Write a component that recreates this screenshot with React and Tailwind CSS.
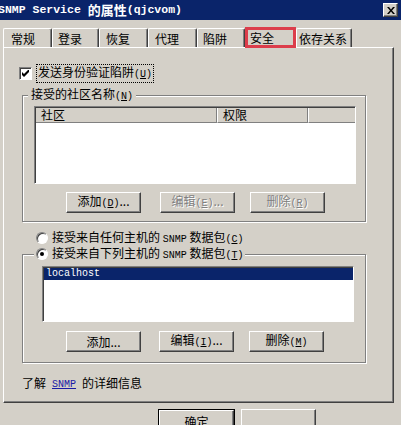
import React from "react";

const Acc = ({ k }) => (
  <span className="font-['Liberation_Mono',monospace] text-[10px]">
    (<span className="underline">{k}</span>)
  </span>
);

const Mono = ({ children }) => (
  <span className="font-['Liberation_Mono',monospace] text-[10px]">{children}</span>
);

function Btn({ children, disabled, className = "" }) {
  return (
    <div
      className={
        "flex h-[21px] w-[75px] items-center justify-center border border-t-white border-l-white border-r-[#404040] border-b-[#404040] shadow-[inset_-1px_-1px_0_#808080] " +
        (disabled ? "text-[#808080] [text-shadow:1px_1px_0_#ffffff] " : "") +
        className
      }
    >
      <span>{children}</span>
    </div>
  );
}

function Tab({ label, w, pl, active }) {
  if (active) {
    return (
      <div
        className={`relative z-10 -mb-[1px] h-[21px] border-[3px] border-[#dc3d4b] bg-[#d4d0c8] ${w} ${pl} pt-[1px]`}
      >
        {label}
      </div>
    );
  }
  return (
    <div
      className={`h-[19px] rounded-t-[2px] border-l border-t border-r border-l-white border-t-white border-r-[#404040] shadow-[inset_-1px_0_0_#808080] pt-[3px] ${w} ${pl}`}
    >
      {label}
    </div>
  );
}

function Radio({ checked }) {
  return (
    <div className="flex h-[12px] w-[12px] items-center justify-center rounded-full border border-t-[#808080] border-l-[#808080] border-r-white border-b-white bg-white shadow-[inset_1px_1px_0_#404040]">
      {checked && <div className="h-[4px] w-[4px] rounded-full bg-black" />}
    </div>
  );
}

const sunken =
  "border border-t-[#808080] border-l-[#808080] border-r-white border-b-white shadow-[inset_1px_1px_0_#404040]";

const etched =
  "border border-[#808080] shadow-[inset_1px_1px_0_#ffffff,1px_1px_0_#ffffff]";

export default function App() {
  return (
    <div className="h-[425px] w-[401px] overflow-hidden bg-[#d4d0c8] font-['Noto_Sans_CJK_SC','Noto_Sans',sans-serif] text-[12px] leading-[14px] text-black">
      {/* title bar */}
      <div className="flex h-[20px] items-center justify-between bg-[#0a246a] pr-[3px]">
        <div className="-ml-[2px] flex items-center font-bold text-white">
          <span className="font-['Liberation_Mono',monospace] text-[11.5px]">SNMP Service&nbsp;</span>
          <span className="text-[13px]">的属性</span>
          <span className="font-['Liberation_Mono',monospace] text-[11.5px]">(qjcvom)</span>
        </div>
        <div className="flex h-[14px] w-[15px] items-center justify-center border border-t-white border-l-white border-r-[#404040] border-b-[#404040] bg-[#d4d0c8] shadow-[inset_-1px_-1px_0_#808080]">
          <svg width="8" height="7" viewBox="0 0 8 7">
            <path d="M0 0h2l2 2.5L6 0h2L5 3.5 8 7H6L4 4.5 2 7H0l3-3.5z" fill="#000" />
          </svg>
        </div>
      </div>

      {/* tabs */}
      <div className="mt-[7px] flex h-[20px] items-end pl-[3px]">
        <Tab label="常规" w="w-[49px]" pl="pl-[7px]" />
        <Tab label="登录" w="w-[47px]" pl="pl-[5px]" />
        <Tab label="恢复" w="w-[49px]" pl="pl-[6px]" />
        <Tab label="代理" w="w-[49px]" pl="pl-[6px]" />
        <Tab label="陷阱" w="w-[48px]" pl="pl-[5px]" />
        <Tab label="安全" w="w-[51px]" pl="pl-[2px]" active />
        <Tab label="依存关系" w="w-[56px]" pl="pl-[2px]" />
      </div>

      {/* panel */}
      <div className="ml-[3px] flex h-[356px] w-[391px] flex-col border border-t-white border-l-white border-r-[#404040] border-b-[#404040] shadow-[inset_-1px_-1px_0_#808080]">
        {/* checkbox */}
        <div className="ml-[15px] mt-[18px] flex h-[14px] items-center">
          <div className={`flex h-[13px] w-[13px] items-center justify-center bg-white ${sunken}`}>
            <svg width="7" height="7" viewBox="0 0 7 7">
              <path d="M0 2v3l2 2 5-5V-1L2 4z" fill="#000" />
            </svg>
          </div>
          <div className="ml-[4px] border border-dotted border-black px-[1px]">
            发送身份验证陷阱<Acc k="U" />
          </div>
        </div>

        {/* group 1 */}
        <fieldset className={`ml-[18px] mt-[7px] w-[344px] pb-[8px] ${etched}`}>
          <legend className="ml-[5px] bg-[#d4d0c8] px-[3px] leading-[14px]">
            接受的社区名称<Acc k="N" />
          </legend>
          <div className={`ml-[11px] mt-[2px] flex h-[78px] w-[322px] flex-col bg-white ${sunken}`}>
            <div className="ml-[1px] mt-[1px] flex h-[15px] bg-[#d4d0c8]">
              <div className="w-[181px] border-r border-b border-r-[#808080] border-b-[#808080] pl-[5px]">社区</div>
              <div className="w-[91px] border-l border-r border-b border-l-white border-r-[#808080] border-b-[#808080] pl-[5px]">权限</div>
              <div className="flex-1 border-l border-b border-l-white border-b-[#808080]" />
            </div>
          </div>
          <div className="ml-[43px] mt-[8px] flex">
            <Btn>添加<Acc k="D" />...</Btn>
            <Btn disabled className="ml-[19px]">编辑<Acc k="E" />...</Btn>
            <Btn disabled className="ml-[15px]">删除<Acc k="R" /></Btn>
          </div>
        </fieldset>

        {/* radio 1 */}
        <div className="ml-[32px] mt-[9px] flex h-[14px] items-center">
          <Radio />
          <span className="ml-[4px]">
            接受来自任何主机的 <Mono>SNMP</Mono> 数据包<Acc k="C" />
          </span>
        </div>

        {/* group 2 */}
        <fieldset className={`ml-[18px] mt-[2px] w-[344px] pb-[10px] ${etched}`}>
          <legend className="ml-[11px] bg-[#d4d0c8] px-[2px] leading-[14px]">
            <span className="flex h-[14px] items-center">
              <Radio checked />
              <span className="ml-[4px]">
                接受来自下列主机的 <Mono>SNMP</Mono> 数据包<Acc k="T" />
              </span>
            </span>
          </legend>
          <div className={`ml-[19px] mt-[5px] h-[56px] w-[312px] bg-white ${sunken}`}>
            <div className="ml-[1px] mt-[1px] flex h-[12px] items-center bg-[#0a246a] pl-[2px] text-white">
              <Mono>localhost</Mono>
            </div>
          </div>
          <div className="ml-[43px] mt-[9px] flex">
            <Btn>添加...</Btn>
            <Btn className="ml-[18px]">编辑<Acc k="I" />...</Btn>
            <Btn className="ml-[15px]">删除<Acc k="M" /></Btn>
          </div>
        </fieldset>

        {/* link */}
        <div className="ml-[18px] mt-[13px] flex h-[14px] items-center">
          <span>了解 </span>
          <span className="ml-[6px] text-[#1a1aa6] underline">
            <Mono>SNMP</Mono>
          </span>
          <span className="ml-[6px]">的详细信息</span>
        </div>
      </div>

      {/* bottom buttons */}
      <div className="mt-[6px] flex pl-[158px]">
        <div className="border border-black">
          <Btn className="h-[23px] w-[73px]">确定</Btn>
        </div>
        <Btn className="ml-[6px] h-[25px]"></Btn>
      </div>
    </div>
  );
}
